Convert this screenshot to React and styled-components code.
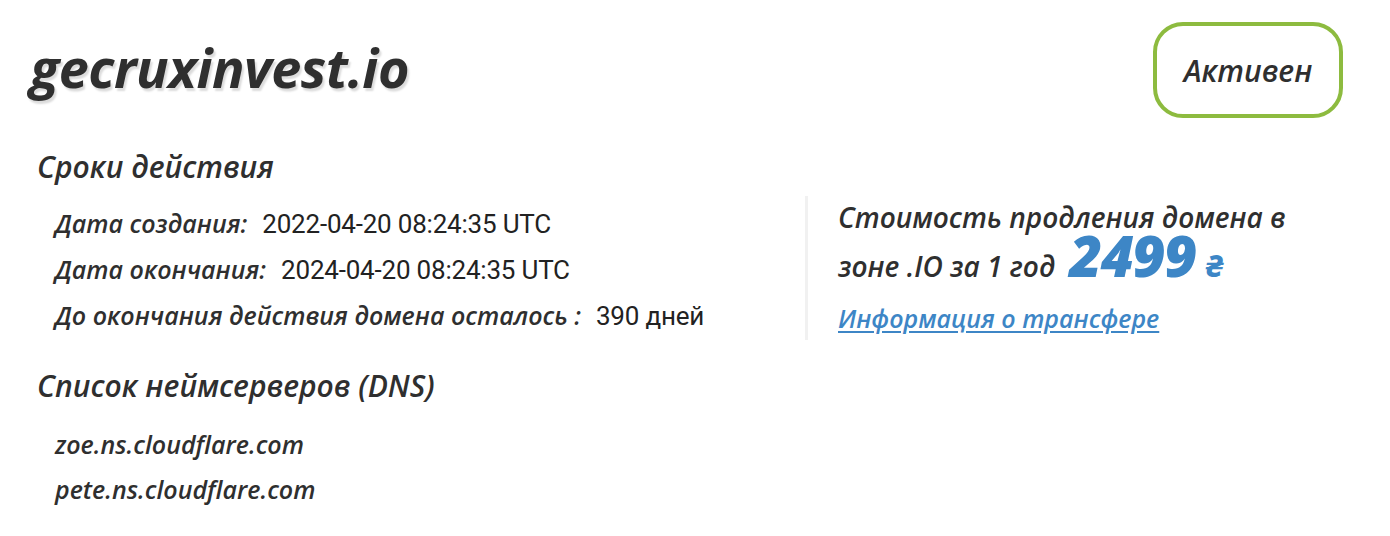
import React from "react";
import styled, { createGlobalStyle } from "styled-components";

const GlobalStyle = createGlobalStyle`
  body {
    margin: 0;
    background: #fff;
    font-family: "Open Sans", "Noto Sans", sans-serif;
    color: #333;
  }
`;

const Page = styled.div`
  width: 1390px;
  height: 536px;
  padding: 22px 47px 0 30px;
  box-sizing: border-box;
`;

const Header = styled.div`
  display: flex;
  justify-content: space-between;
  align-items: flex-start;
`;

const Domain = styled.h1`
  margin: 13px 0 0;
  font-size: 54px;
  line-height: 64px;
  font-style: italic;
  font-weight: 700;
  letter-spacing: -0.5px;
  color: #2f2f2f;
  text-shadow: 2px 3px 2px #dcdcdc;
`;

const Status = styled.div`
  width: 190px;
  height: 96px;
  box-sizing: border-box;
  border: 4px solid #8dbb3f;
  border-radius: 30px;
  display: flex;
  align-items: center;
  justify-content: center;
  font-size: 30px;
  font-style: italic;
  font-weight: 600;
  color: #2f2f2f;
`;

const Body = styled.div`
  display: grid;
  grid-template-columns: 768px 3px 1fr;
  padding-left: 7px;
`;

const Left = styled.div`
  display: flex;
  flex-direction: column;
`;

const SectionTitle = styled.h2`
  margin: ${(p) => p.$top}px 0 0;
  font-size: 30px;
  line-height: 40px;
  font-style: italic;
  font-weight: 600;
  color: #2f2f2f;
`;

const List = styled.div`
  display: flex;
  flex-direction: column;
  gap: ${(p) => p.$gap}px;
  padding-left: 18px;
  margin-top: ${(p) => p.$top}px;
`;

const Row = styled.div`
  display: flex;
  align-items: baseline;
  font-size: 25px;
  line-height: 30px;
`;

const Label = styled.span`
  font-style: italic;
  font-weight: 600;
  color: #2f2f2f;
  margin-right: 15px;
`;

const Value = styled.span`
  font-family: "Roboto", "Liberation Sans", sans-serif;
  font-size: 26px;
  letter-spacing: -0.2px;
  color: #222;
`;

const Server = styled.div`
  font-size: 25px;
  line-height: 30px;
  font-style: italic;
  font-weight: 600;
  color: #2f2f2f;
`;

const Divider = styled.div`
  background: #f1f1f1;
  margin-top: 78px;
  height: 144px;
`;

const Right = styled.div`
  padding-left: 30px;
  padding-top: 76px;
`;

const PriceLine = styled.div`
  height: ${(p) => p.$h}px;
  font-size: 28px;
  line-height: 47px;
  font-style: italic;
  font-weight: 600;
  color: #2f2f2f;
  white-space: nowrap;
`;

const Amount = styled.span`
  font-size: 57px;
  line-height: 0;
  font-weight: 800;
  color: #3d86c6;
  margin-left: 14px;
  letter-spacing: -1.5px;
`;

const Currency = styled.span`
  font-size: 31px;
  line-height: 0;
  font-weight: 800;
  color: #3d86c6;
  margin-left: 10px;
`;

const Transfer = styled.a`
  display: block;
  width: max-content;
  margin-top: 13px;
  font-size: 25px;
  line-height: 30px;
  font-style: italic;
  font-weight: 600;
  color: #3d86c6;
  text-decoration: underline;
  text-underline-offset: 3px;
`;

export default function App() {
  return (
    <>
      <GlobalStyle />
      <Page>
        <Header>
          <Domain>gecruxinvest.io</Domain>
          <Status>Активен</Status>
        </Header>
        <Body>
          <Left>
            <SectionTitle $top={29}>Сроки действия</SectionTitle>
            <List $gap={15} $top={21}>
              <Row>
                <Label>Дата создания:</Label>
                <Value>2022-04-20 08:24:35 UTC</Value>
              </Row>
              <Row>
                <Label>Дата окончания:</Label>
                <Value>2024-04-20 08:24:35 UTC</Value>
              </Row>
              <Row>
                <Label>До окончания действия домена осталось :</Label>
                <Value>390 дней</Value>
              </Row>
            </List>
            <SectionTitle $top={35}>Список неймсерверов (DNS)</SectionTitle>
            <List $gap={15} $top={23}>
              <Server>zoe.ns.cloudflare.com</Server>
              <Server>pete.ns.cloudflare.com</Server>
            </List>
          </Left>
          <Divider />
          <Right>
            <PriceLine $h={49}>Стоимость продления домена в</PriceLine>
            <PriceLine $h={47}>
              зоне .IO за 1 год
              <Amount>2499</Amount>
              <Currency>₴</Currency>
            </PriceLine>
            <Transfer href="#">Информация о трансфере</Transfer>
          </Right>
        </Body>
      </Page>
    </>
  );
}
